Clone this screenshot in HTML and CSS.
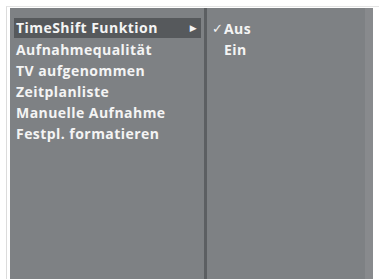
FILE: index.html
```html
<!DOCTYPE html>
<html lang="de">
<head>
    <meta charset="UTF-8">
    <title>Aufnahme</title>
    <link rel="stylesheet" href="styles.css">
</head>
<body>
    <div class="frame">
        <div class="screen">
            <div class="menu">
                <div class="item active"><span>TimeShift Funktion</span><span class="arrow">&#9654;</span></div>
                <div class="item">Aufnahmequalität</div>
                <div class="item">TV aufgenommen</div>
                <div class="item">Zeitplanliste</div>
                <div class="item">Manuelle Aufnahme</div>
                <div class="item">Festpl. formatieren</div>
            </div>
            <div class="divider"></div>
            <div class="sub">
                <div class="opt"><span class="check">&#10003;</span>Aus</div>
                <div class="opt"><span class="check"></span>Ein</div>
            </div>
        </div>
    </div>
</body>
</html>
```

FILE: styles.css
```css
* {
    padding: 0;
    margin: 0;
    box-sizing: border-box;
}

body {
    background-color: #ffffff;
    font-family: "Open Sans", "DejaVu Sans", sans-serif;
    font-weight: bold;
    color: #f4f4f4;
}

.frame {
    margin: 6px 0 0 6px;
    width: 373px;
    height: 273px;
    padding: 1px 0 0 3px;
    border-left: 1px solid #dcdcdc;
    border-top: 1px solid #e4e4e4;
}

.screen {
    display: flex;
    width: 363px;
    height: 272px;
    background-color: #7e8184;
    border-right: 8px solid #888a8d;
}

.menu {
    width: 194px;
    padding: 10px 3px 0 4px;
}

.item {
    height: 21px;
    line-height: 21px;
    font-size: 14px;
    padding-left: 2px;
    letter-spacing: 0.45px;
}

.active {
    display: flex;
    justify-content: space-between;
    background-color: #56595c;
    height: 20px;
    line-height: 20px;
    margin-bottom: 1px;
}

.arrow {
    font-size: 9px;
    padding-right: 4px;
}

.divider {
    width: 3px;
    background-color: #5c5f62;
}

.sub {
    flex: 1;
    padding: 10px 0 0 5px;
}

.opt {
    display: flex;
    height: 21px;
    line-height: 21px;
    font-size: 14px;
    letter-spacing: 0.45px;
}

.check {
    width: 12px;
    font-size: 13px;
    font-family: "DejaVu Sans", sans-serif;
}
```
